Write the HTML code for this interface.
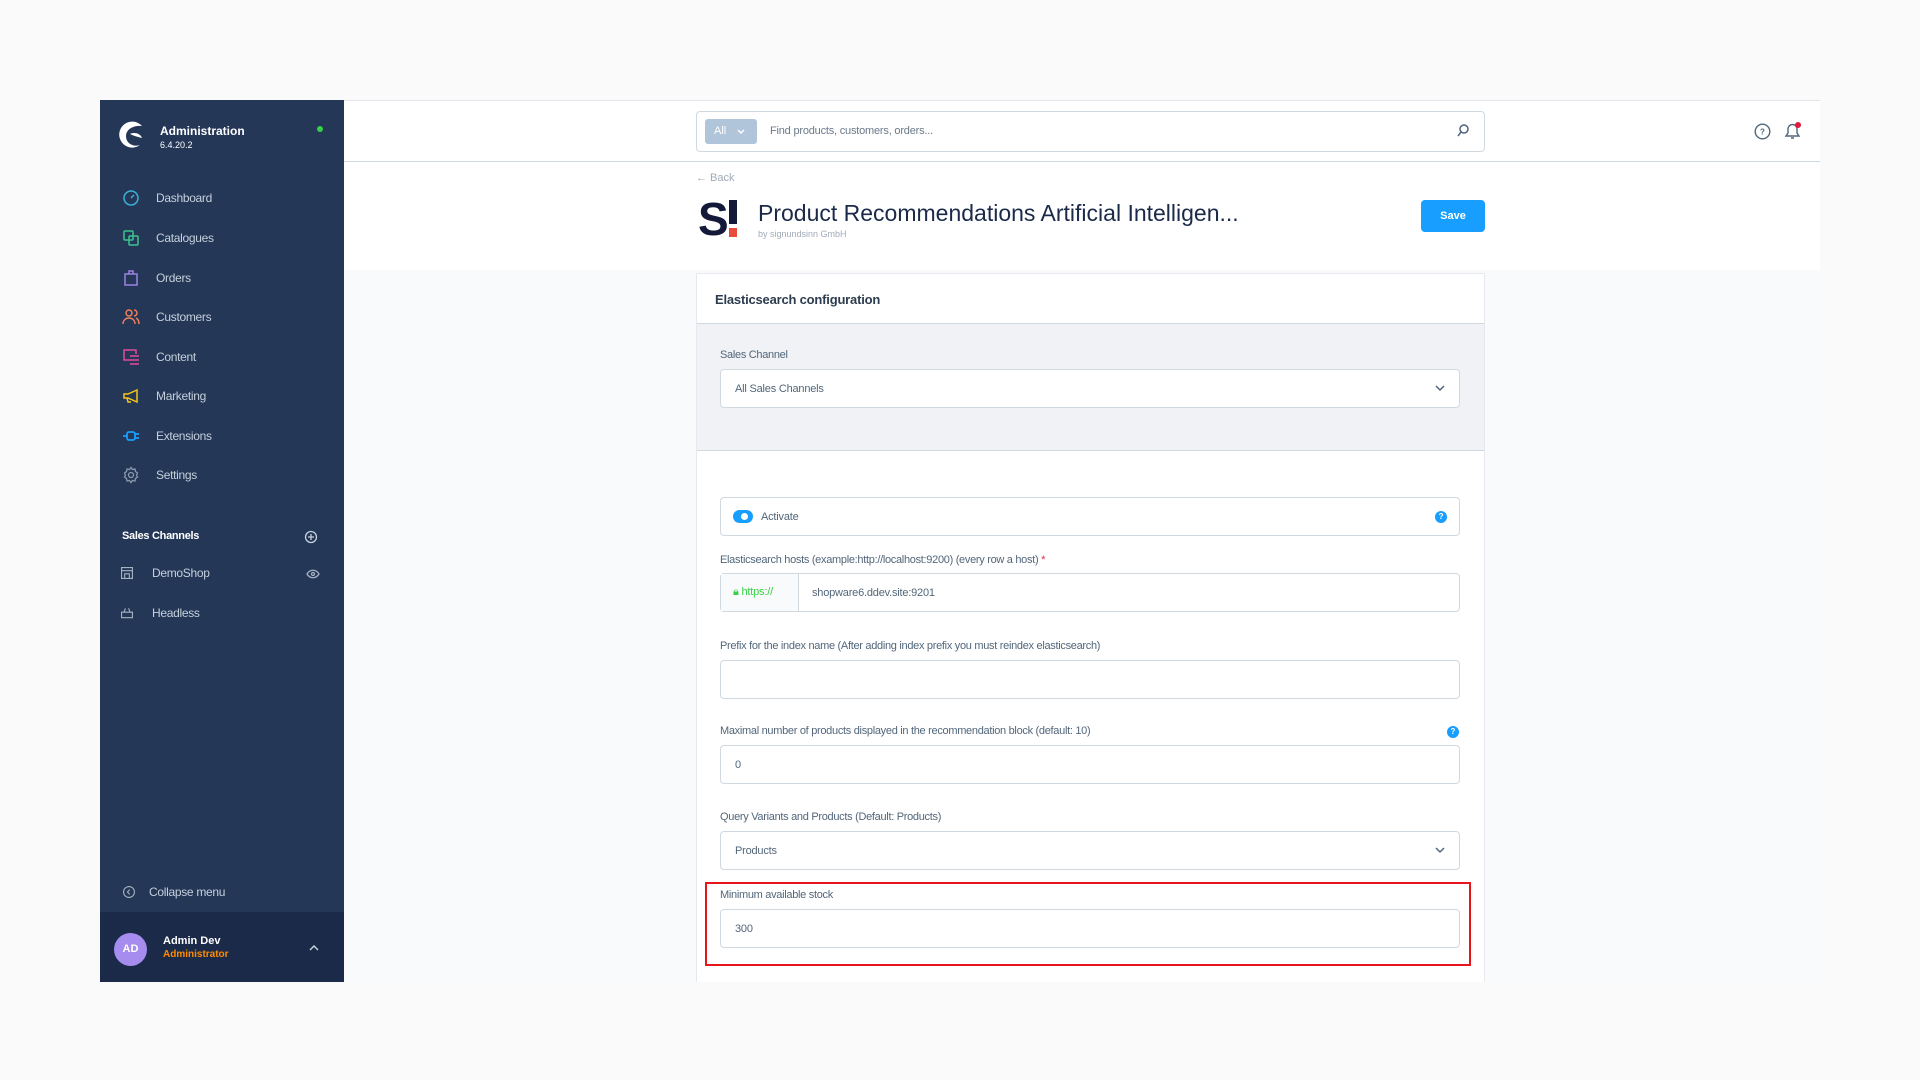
<!DOCTYPE html>
<html><head><meta charset="utf-8"><style>
*{box-sizing:border-box;margin:0;padding:0}
body{width:1920px;height:1080px;background:#fafafa;font-family:"Liberation Sans",sans-serif;position:relative;overflow:hidden;color:#52667a}
.abs{position:absolute}
#side{left:100px;top:100px;width:244px;height:882px;background:#243757}
.nav{position:absolute;left:22px;font-size:12px;color:#c5d0dc;display:flex;align-items:center;letter-spacing:-0.3px}
.nav svg{width:18px;height:18px;margin-right:16px}
#main{left:344px;top:100px;width:1476px;height:882px;background:#f9fafb}
.lbl{position:absolute;left:720px;font-size:11px;color:#52667a;letter-spacing:-0.3px}
.inp{position:absolute;left:720px;width:740px;height:39px;background:#fff;border:1px solid #d1d9e0;border-radius:4px;font-size:11px;color:#52667a;padding-left:14px;display:flex;align-items:center;letter-spacing:-0.2px}
.chev{position:absolute;right:14px;top:15px}
.q{display:inline-block;width:12px;height:12px;border-radius:50%;background:#189eff;color:#fff;font-size:8px;font-weight:bold;text-align:center;line-height:12px}
</style></head><body>
<div id="side" class="abs">
 <svg class="abs" style="left:16px;top:20px" width="30" height="30" viewBox="0 0 30 30"><path d="M26 6A13 13 0 1 0 24 25C18 27 10 24 10 16 10 9 18 5 26 6Z" fill="#fff"/><path d="M14 14c4-2 10-1 12 4-4-1-8-2-12-4z" fill="#fff"/></svg>
 <div class="abs" style="left:60px;top:24px;color:#fff;font-weight:bold;font-size:12px">Administration</div>
 <div class="abs" style="left:60px;top:40px;color:#fff;font-size:9px">6.4.20.2</div>
 <div class="abs" style="left:217px;top:26px;width:6px;height:6px;border-radius:50%;background:#37d046"></div>
 <div class="nav" style="top:89px"><svg viewBox="0 0 18 18" fill="none" stroke="#3ab0d8" stroke-width="1.5"><circle cx="9" cy="9" r="7"/><path d="M9 9l3-3"/></svg>Dashboard</div>
 <div class="nav" style="top:129px"><svg viewBox="0 0 18 18" fill="none" stroke="#3cc48f" stroke-width="1.5"><rect x="2" y="2" width="9" height="9" rx="1"/><rect x="7" y="7" width="9" height="9" rx="1"/></svg>Catalogues</div>
 <div class="nav" style="top:169px"><svg viewBox="0 0 18 18" fill="none" stroke="#9b82e6" stroke-width="1.5"><path d="M3 5h12v11H3zM7 5V2h4v3"/></svg>Orders</div>
 <div class="nav" style="top:208px"><svg viewBox="0 0 18 18" fill="none" stroke="#f07e5a" stroke-width="1.5"><circle cx="7" cy="5" r="3"/><path d="M1 16c0-4 3-6 6-6s6 2 6 6M12 2a3 3 0 0 1 0 6M14 10c2 1 3 3 3 6"/></svg>Customers</div>
 <div class="nav" style="top:248px"><svg viewBox="0 0 18 18" fill="none" stroke="#e14b9a" stroke-width="1.5"><path d="M9 12H2V2h12v4M8 8h9M8 12h9M8 16h9"/></svg>Content</div>
 <div class="nav" style="top:287px"><svg viewBox="0 0 18 18" fill="none" stroke="#f5c518" stroke-width="1.5"><path d="M2 7h4l9-4v12L6 11H2zM5 11l1 4h3"/></svg>Marketing</div>
 <div class="nav" style="top:327px"><svg viewBox="0 0 18 18" fill="none" stroke="#189eff" stroke-width="1.8"><rect x="5" y="5" width="8" height="8" rx="2"/><path d="M1 9h4M13 7h4M13 11h4"/></svg>Extensions</div>
 <div class="nav" style="top:366px"><svg viewBox="0 0 18 18" fill="none" stroke="#8a99ab" stroke-width="1.3"><circle cx="9" cy="9" r="2.5"/><path d="M9 1.5l1.5 2 2.5-.5.5 2.5 2 1.5-1 2 1 2-2 1.5-.5 2.5-2.5-.5L9 16.5l-1.5-2-2.5.5-.5-2.5-2-1.5 1-2-1-2 2-1.5.5-2.5 2.5.5z"/></svg>Settings</div>
 <div class="abs" style="left:22px;top:430px;color:#fff;font-weight:bold;font-size:11px;letter-spacing:-0.3px">Sales Channels</div>
 <svg class="abs" style="left:204px;top:430px" width="14" height="14" viewBox="0 0 14 14" fill="none" stroke="#c5d0dc" stroke-width="1.3"><circle cx="7" cy="7" r="5.5"/><path d="M7 4v6M4 7h6"/></svg>
 <div class="nav" style="top:466px;left:20px"><svg viewBox="0 0 18 18" style="width:14px;height:14px" fill="none" stroke="#a6b3c2" stroke-width="1.4"><path d="M2 2h14v14H2zM2 6h14M6 16v-6h6v6"/></svg><span style="margin-left:2px">DemoShop</span></div>
 <svg class="abs" style="left:206px;top:469px" width="14" height="10" viewBox="0 0 14 10" fill="none" stroke="#a6b3c2" stroke-width="1.3"><path d="M1 5c3-5 9-5 12 0-3 5-9 5-12 0z"/><circle cx="7" cy="5" r="1.5"/></svg>
 <div class="nav" style="top:506px;left:20px"><svg viewBox="0 0 18 18" style="width:14px;height:14px" fill="none" stroke="#a6b3c2" stroke-width="1.4"><path d="M2 8h14v7H2zM5 8l2-5M13 8l-2-5"/></svg><span style="margin-left:2px">Headless</span></div>
 <div class="nav" style="top:785px;left:22px"><svg viewBox="0 0 18 18" style="width:14px;height:14px;margin-right:13px" fill="none" stroke="#a6b3c2" stroke-width="1.4"><circle cx="9" cy="9" r="7"/><path d="M10 6l-3 3 3 3"/></svg>Collapse menu</div>
 <div class="abs" style="left:0;top:812px;width:244px;height:70px;background:#1b2a48">
  <div class="abs" style="left:14px;top:21px;width:33px;height:33px;border-radius:50%;background:#a58cee;color:#fff;font-size:11px;font-weight:bold;text-align:center;line-height:33px">AD</div>
  <div class="abs" style="left:63px;top:23px;color:#fff;font-weight:bold;font-size:11px">Admin Dev</div>
  <div class="abs" style="left:63px;top:37px;color:#ff8c00;font-weight:bold;font-size:10px">Administrator</div>
  <svg class="abs" style="left:209px;top:33px" width="10" height="6" viewBox="0 0 10 6" fill="none" stroke="#c5d0dc" stroke-width="1.5"><path d="M1 5l4-4 4 4"/></svg>
 </div>
</div>
<div id="main" class="abs"></div>
<div class="abs" style="left:344px;top:100px;width:1476px;height:170px;background:#fff"></div>
<div class="abs" style="left:344px;top:161px;width:1476px;height:1px;background:#d1d9e0"></div>
<div class="abs" style="left:344px;top:100px;width:1476px;height:1px;background:#e0e6eb"></div>
<div class="abs" style="left:696px;top:111px;width:789px;height:41px;border:1px solid #d1d9e0;border-radius:4px;background:#fff"></div>
<div class="abs" style="left:705px;top:119px;width:52px;height:25px;background:#b0c4da;border-radius:3px;color:#fff;font-size:11px;line-height:25px;padding-left:9px">All
<svg style="position:absolute;left:32px;top:10px" width="8" height="6" viewBox="0 0 8 6" fill="none" stroke="#fff" stroke-width="1.5"><path d="M1 1l3 3 3-3"/></svg></div>
<div class="abs" style="left:770px;top:125px;font-size:11px;color:#6b7a8a;letter-spacing:-0.2px">Find products, customers, orders...</div>
<svg class="abs" style="left:1457px;top:124px" width="12" height="14" viewBox="0 0 12 14" fill="none" stroke="#52667a" stroke-width="1.5"><circle cx="7" cy="5" r="4"/><path d="M4 8l-3 4"/></svg>
<svg class="abs" style="left:1754px;top:123px" width="17" height="17" viewBox="0 0 17 17" fill="none" stroke="#52667a" stroke-width="1.4"><circle cx="8.5" cy="8.5" r="7.3"/><text x="8.5" y="11.5" font-size="8" font-weight="bold" fill="#52667a" stroke="none" text-anchor="middle" font-family="Liberation Sans">?</text></svg>
<svg class="abs" style="left:1783px;top:121px" width="20" height="20" viewBox="0 0 20 20" fill="none" stroke="#52667a" stroke-width="1.4"><path d="M3 15h13l-2-3V8a4.5 4.5 0 0 0-9 0v4zM8 17h3"/><circle cx="15" cy="4" r="3" fill="#e5163f" stroke="none"/></svg>
<div class="abs" style="left:696px;top:172px;font-size:11px;color:#a0abb8">&#8592; Back</div>
<div class="abs" style="left:698px;top:198px;font-size:46px;font-weight:900;color:#14193a;line-height:42px;letter-spacing:-3px">S</div>
<div class="abs" style="left:729px;top:200px;width:8px;height:24px;background:#14193a"></div>
<div class="abs" style="left:729px;top:228px;width:8px;height:9px;background:#e84c3d"></div>
<div class="abs" style="left:758px;top:200px;font-size:23px;color:#1b2a48">Product Recommendations Artificial Intelligen...</div>
<div class="abs" style="left:758px;top:229px;font-size:9px;color:#a0abb8">by signundsinn GmbH</div>
<div class="abs" style="left:1421px;top:200px;width:64px;height:32px;background:#189eff;border-radius:4px;color:#fff;font-weight:bold;font-size:11px;text-align:center;line-height:32px">Save</div>
<div class="abs" style="left:696px;top:273px;width:789px;height:709px;background:#fff;border:1px solid #e6eaee;border-bottom:none"></div>
<div class="abs" style="left:715px;top:292px;font-size:13px;font-weight:bold;color:#2d3c4e;letter-spacing:-0.2px">Elasticsearch configuration</div>
<div class="abs" style="left:697px;top:323px;width:787px;height:128px;background:#f0f2f5;border-top:1px solid #d1d9e0;border-bottom:1px solid #d1d9e0"></div>
<div class="lbl" style="top:349px">Sales Channel</div>
<div class="inp" style="top:369px">All Sales Channels<svg class="chev" width="10" height="7" viewBox="0 0 10 7" fill="none" stroke="#52667a" stroke-width="1.5"><path d="M1 1l4 4 4-4"/></svg></div>
<div class="inp" style="top:497px;padding-left:12px"><span style="display:inline-block;width:20px;height:13px;border-radius:7px;background:#189eff;position:relative;margin-right:8px"><span style="position:absolute;left:8px;top:3px;width:7px;height:7px;border-radius:50%;background:#fff"></span></span>Activate<span class="q" style="position:absolute;right:12px;top:13px">?</span></div>
<div class="lbl" style="top:554px">Elasticsearch hosts (example:http://localhost:9200) (every row a host) <span style="color:#de294c">*</span></div>
<div class="inp" style="top:573px;padding-left:0"><div style="width:78px;height:100%;background:#f9fafb;border-right:1px solid #d1d9e0;color:#37d046;font-size:11px;padding:12px 0 0 12px">&#128274;&#xFE0E; https://</div><span style="margin-left:13px">shopware6.ddev.site:9201</span></div>
<div class="lbl" style="top:640px">Prefix for the index name (After adding index prefix you must reindex elasticsearch)</div>
<div class="inp" style="top:660px"></div>
<div class="lbl" style="top:725px">Maximal number of products displayed in the recommendation block (default: 10)</div>
<span class="q abs" style="left:1447px;top:726px">?</span>
<div class="inp" style="top:745px">0</div>
<div class="lbl" style="top:811px">Query Variants and Products (Default: Products)</div>
<div class="inp" style="top:831px">Products<svg class="chev" width="10" height="7" viewBox="0 0 10 7" fill="none" stroke="#52667a" stroke-width="1.5"><path d="M1 1l4 4 4-4"/></svg></div>
<div class="abs" style="left:705px;top:882px;width:766px;height:84px;border:2px solid #e8141c"></div>
<div class="lbl" style="top:889px">Minimum available stock</div>
<div class="inp" style="top:909px">300</div>
</body></html>
